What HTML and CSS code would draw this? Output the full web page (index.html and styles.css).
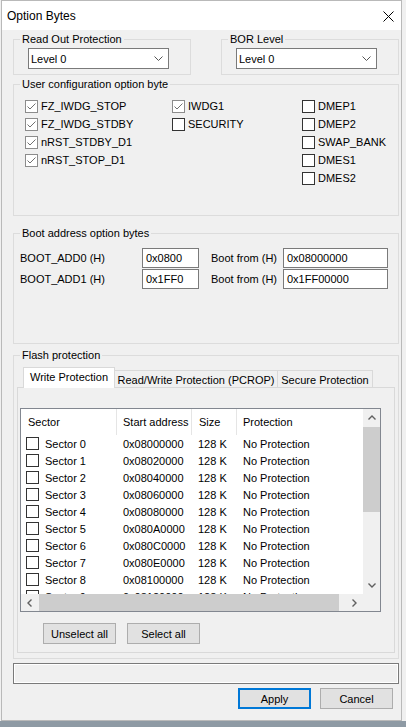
FILE: index.html
```html
<!DOCTYPE html>
<html lang="en">
<head>
  <meta charset="UTF-8" />
  <title>Option Bytes</title>
  <link rel="stylesheet" href="styles.css">
</head>
<body>
  <div class="dialog">
    <div class="titlebar">
      <span class="title">Option Bytes</span>
      <svg class="close" width="11" height="11" viewBox="0 0 11 11">
        <path d="M0.5 0.5 L10.5 10.5 M10.5 0.5 L0.5 10.5" stroke="#000" stroke-width="1" fill="none" />
      </svg>
    </div>

    <div class="content">
      <div class="top-row">
        <fieldset class="group">
          <legend>Read Out Protection</legend>
          <div class="combo-wrap">
            <div class="combo">
              <span>Level 0</span>
              <svg width="9" height="5" viewBox="0 0 9 5"><path d="M0.5 0.5 L4.5 4.5 L8.5 0.5" stroke="#555" fill="none" /></svg>
            </div>
          </div>
        </fieldset>
        <fieldset class="group">
          <legend>BOR Level</legend>
          <div class="combo-wrap">
            <div class="combo">
              <span>Level 0</span>
              <svg width="9" height="5" viewBox="0 0 9 5"><path d="M0.5 0.5 L4.5 4.5 L8.5 0.5" stroke="#555" fill="none" /></svg>
            </div>
          </div>
        </fieldset>
      </div>

      <fieldset class="group user-config">
        <legend>User configuration option byte</legend>
        <div class="opt-grid">
          <div class="opt-col">
            <div class="check"><span class="box on"><svg width="11" height="11" viewBox="0 0 11 11"><path d="M1.5 5.5 L4 8 L9.5 2.5" stroke="#707070" fill="none" /></svg></span>FZ_IWDG_STOP</div>
            <div class="check"><span class="box on"><svg width="11" height="11" viewBox="0 0 11 11"><path d="M1.5 5.5 L4 8 L9.5 2.5" stroke="#707070" fill="none" /></svg></span>FZ_IWDG_STDBY</div>
            <div class="check"><span class="box on"><svg width="11" height="11" viewBox="0 0 11 11"><path d="M1.5 5.5 L4 8 L9.5 2.5" stroke="#707070" fill="none" /></svg></span>nRST_STDBY_D1</div>
            <div class="check"><span class="box on"><svg width="11" height="11" viewBox="0 0 11 11"><path d="M1.5 5.5 L4 8 L9.5 2.5" stroke="#707070" fill="none" /></svg></span>nRST_STOP_D1</div>
          </div>
          <div class="opt-col">
            <div class="check"><span class="box on"><svg width="11" height="11" viewBox="0 0 11 11"><path d="M1.5 5.5 L4 8 L9.5 2.5" stroke="#707070" fill="none" /></svg></span>IWDG1</div>
            <div class="check"><span class="box"></span>SECURITY</div>
          </div>
          <div class="opt-col">
            <div class="check"><span class="box"></span>DMEP1</div>
            <div class="check"><span class="box"></span>DMEP2</div>
            <div class="check"><span class="box"></span>SWAP_BANK</div>
            <div class="check"><span class="box"></span>DMES1</div>
            <div class="check"><span class="box"></span>DMES2</div>
          </div>
        </div>
      </fieldset>

      <fieldset class="group boot">
        <legend>Boot address option bytes</legend>
        <div class="boot-grid">
          <span>BOOT_ADD0 (H)</span>
          <div class="field short">0x0800</div>
          <span>Boot from (H)</span>
          <div class="field long">0x08000000</div>
          <span>BOOT_ADD1 (H)</span>
          <div class="field short">0x1FF0</div>
          <span>Boot from (H)</span>
          <div class="field long">0x1FF00000</div>
        </div>
      </fieldset>

      <fieldset class="group flash">
        <legend>Flash protection</legend>
        <div class="tabs">
          <div class="tab active">Write Protection</div>
          <div class="tab wide">Read/Write Protection (PCROP)</div>
          <div class="tab">Secure Protection</div>
        </div>
        <div class="tab-panel">
          <div class="list">
            <div class="list-view">
              <div class="list-head">
                <div class="hcell">Sector</div>
                <div class="hcell">Start address</div>
                <div class="hcell">Size</div>
                <div class="hcell last">Protection</div>
              </div>
              <div id="rows"></div>
            </div>
            <div class="vscroll">
              <div class="arrow">
                <svg width="8" height="5" viewBox="0 0 8 5"><path d="M0.5 4.5 L4 1 L7.5 4.5" stroke="#606060" stroke-width="1.4" fill="none" /></svg>
              </div>
              <div class="vthumb"></div>
              <div class="spacer"></div>
              <div class="arrow">
                <svg width="8" height="5" viewBox="0 0 8 5"><path d="M0.5 0.5 L4 4 L7.5 0.5" stroke="#606060" stroke-width="1.4" fill="none" /></svg>
              </div>
            </div>
            <div class="hscroll">
              <div class="arrow">
                <svg width="5" height="8" viewBox="0 0 5 8"><path d="M4.5 0.5 L1 4 L4.5 7.5" stroke="#606060" stroke-width="1.4" fill="none" /></svg>
              </div>
              <div class="hthumb"></div>
              <div class="spacer"></div>
              <div class="arrow">
                <svg width="5" height="8" viewBox="0 0 5 8"><path d="M0.5 0.5 L4 4 L0.5 7.5" stroke="#606060" stroke-width="1.4" fill="none" /></svg>
              </div>
            </div>
            <div class="corner"></div>
          </div>
          <div class="list-actions">
            <div class="btn">Unselect all</div>
            <div class="btn">Select all</div>
          </div>
        </div>
      </fieldset>

      <div class="status"></div>

      <div class="footer">
        <div class="btn default">Apply</div>
        <div class="btn">Cancel</div>
      </div>
    </div>
  </div>
  <div class="desk"></div>

  <script>
    const starts = ["08000000", "08020000", "08040000", "08060000", "08080000",
                    "080A0000", "080C0000", "080E0000", "08100000", "08120000"];
    const rows = document.getElementById('rows');

    starts.forEach((addr, i) => {
      const row = document.createElement('div');
      row.className = 'list-row';
      row.innerHTML =
        '<div class="cell sector"><span class="box"></span>Sector ' + i + '</div>' +
        '<div class="cell">0x' + addr + '</div>' +
        '<div class="cell">128 K</div>' +
        '<div class="cell">No Protection</div>';
      rows.appendChild(row);
    });
  </script>
</body>
</html>
```

FILE: styles.css
```css
body {
  margin: 0;
  background-color: #f0f0f0;
  color: #000;
  font-family: "Liberation Sans", Arial, sans-serif;
  font-size: 11px;
}

.dialog {
  margin-left: 1px;
  width: 399px;
  border: 1px solid #b9b9b9;
  background-color: #f0f0f0;
}

.titlebar {
  height: 29px;
  background-color: #fff;
  display: flex;
  justify-content: space-between;
  align-items: center;
  padding: 0 7px 0 5px;
}

.title {
  font-size: 12px;
}

.close {
  margin-top: 1px;
}

.content {
  padding: 3px 2px 11px 11px;
}

/* group boxes */

.group {
  margin: 0;
  padding: 0;
  min-width: 0;
  border: 1px solid #dcdcdc;
}

.group legend {
  margin-left: 6px;
  padding: 0 2px;
  line-height: 13px;
  font-size: 11px;
}

.top-row {
  display: grid;
  grid-template-columns: 178px 178px;
  column-gap: 30px;
}

.combo-wrap {
  padding: 2px 0 5px 14px;
}

.combo {
  box-sizing: border-box;
  width: 141px;
  height: 21px;
  background-color: #fff;
  border: 1px solid #7a7a7a;
  display: flex;
  justify-content: space-between;
  align-items: center;
  padding: 0 5px 0 2px;
}

/* user configuration */

.user-config {
  margin-top: 3px;
}

.opt-grid {
  display: grid;
  grid-template-columns: 147px 130px 1fr;
  padding: 6px 0 28px 11px;
}

.opt-col {
  display: flex;
  flex-direction: column;
}

.check {
  height: 18px;
  display: flex;
  align-items: center;
  gap: 3px;
}

.box {
  box-sizing: border-box;
  width: 13px;
  height: 13px;
  flex: none;
  background-color: #fff;
  border: 1px solid #333;
  display: flex;
}

.box.on {
  border-color: #8c8c8c;
}

/* boot address */

.boot {
  margin-top: 11px;
}

.boot-grid {
  display: grid;
  grid-template-columns: 122px 69px 72px 105px;
  row-gap: 1px;
  align-items: center;
  padding: 8px 0 54px 6px;
}

.field {
  box-sizing: border-box;
  height: 20px;
  background-color: #fff;
  border: 1px solid #7a7a7a;
  padding-left: 3px;
  display: flex;
  align-items: center;
}

.field.short {
  width: 57px;
}

.field.long {
  width: 105px;
}

/* flash protection */

.flash {
  margin-top: 5px;
  padding-bottom: 5px;
}

.tabs {
  display: flex;
  align-items: flex-end;
  padding-left: 9px;
  margin-top: 5px;
}

.tab {
  box-sizing: border-box;
  width: 96px;
  height: 17px;
  margin-left: -1px;
  border: 1px solid #d9d9d9;
  border-bottom: none;
  display: flex;
  justify-content: center;
  align-items: center;
  padding-top: 1px;
}

.tab.wide {
  width: 164px;
}

.tab.active {
  position: relative;
  z-index: 1;
  width: 92px;
  height: 21px;
  margin-left: 0;
  margin-bottom: -1px;
  background-color: #fff;
  padding-top: 0;
  padding-bottom: 2px;
}

.tab-panel {
  margin: 0 3px;
  border: 1px solid #d9d9d9;
  padding: 20px 0 8px 2px;
}

.list {
  width: 359px;
  border: 1px solid #828790;
  background-color: #fff;
  display: grid;
  grid-template-columns: 342px 17px;
  grid-template-rows: 185px 17px;
}

.list-view {
  overflow: hidden;
}

.list-head,
.list-row {
  display: grid;
  grid-template-columns: 96px 75px 45px 1fr;
  align-items: center;
}

.list-head {
  height: 26px;
  align-items: stretch;
}

.hcell {
  border-right: 1px solid #e5e5e5;
  padding-left: 7px;
  display: flex;
  align-items: center;
}

.hcell:nth-child(2),
.hcell.last {
  padding-left: 6px;
}

.hcell.last {
  border-right: none;
}

.list-row {
  height: 17px;
}

.cell {
  padding-left: 6px;
}

.cell.sector {
  padding-left: 5px;
  display: flex;
  align-items: center;
  gap: 6px;
}

.vscroll {
  background-color: #f0f0f0;
  display: flex;
  flex-direction: column;
}

.vscroll .arrow {
  height: 17px;
  display: flex;
  justify-content: center;
  align-items: center;
}

.vthumb {
  height: 85px;
  margin-top: 1px;
  background-color: #cdcdcd;
}

.spacer {
  flex: 1;
}

.hscroll {
  background-color: #f0f0f0;
  display: flex;
}

.hscroll .arrow {
  width: 17px;
  display: flex;
  justify-content: center;
  align-items: center;
}

.hthumb {
  width: 300px;
  margin-left: 1px;
  background-color: #cdcdcd;
}

.corner {
  background-color: #f0f0f0;
}

.list-actions {
  display: flex;
  gap: 11px;
  margin: 11px 0 0 23px;
}

/* buttons */

.btn {
  box-sizing: border-box;
  width: 73px;
  height: 21px;
  background-color: #e1e1e1;
  border: 1px solid #adadad;
  display: flex;
  justify-content: center;
  align-items: center;
  font-size: 11px;
}

.btn.default {
  border: 2px solid #0078d7;
}

.status {
  box-sizing: border-box;
  height: 21px;
  width: 386px;
  margin-top: 4px;
  border: 1px solid #7a7a7a;
  box-shadow: inset 1px 1px 0 #fff, inset -1px -1px 0 #fff;
}

.footer {
  display: flex;
  justify-content: flex-end;
  gap: 9px;
  margin-top: 4px;
  padding-right: 6px;
}

.desk {
  height: 20px;
  background-color: #8e9aa4;
}
```
